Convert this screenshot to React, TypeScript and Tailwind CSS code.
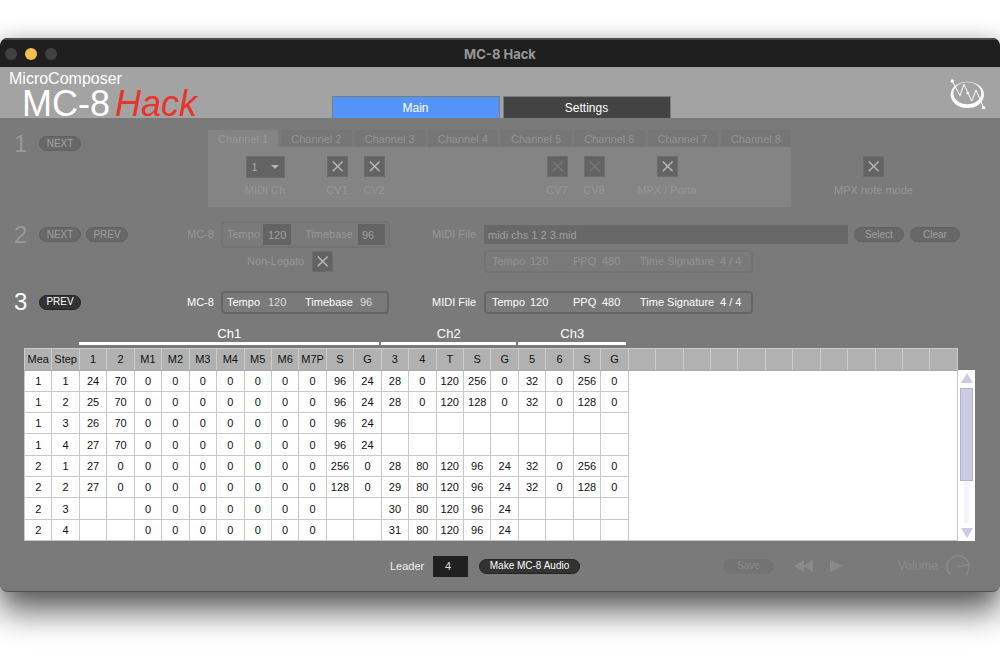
/**
 * App.tsx
 * MC-8 Hack: MIDI file to MicroComposer step table converter
 * Three numbered steps, only the active one is lit
 */

import { useState } from "react";
import clsx from "clsx";

const CHANNELS = [1, 2, 3, 4, 5, 6, 7, 8];

const GROUPS = [
  { name: "Ch1", columns: ["1", "2", "M1", "M2", "M3", "M4", "M5", "M6", "M7P", "S", "G"] },
  { name: "Ch2", columns: ["3", "4", "T", "S", "G"] },
  { name: "Ch3", columns: ["5", "6", "S", "G"] },
];

const SPARE_COLUMNS = 12;

// "-" is a cell without a value
const ROWS = [
  "1 1 24 70 0 0 0 0 0 0 0 96 24 28 0 120 256 0 32 0 256 0",
  "1 2 25 70 0 0 0 0 0 0 0 96 24 28 0 120 128 0 32 0 128 0",
  "1 3 26 70 0 0 0 0 0 0 0 96 24 - - - - - - - - -",
  "1 4 27 70 0 0 0 0 0 0 0 96 24 - - - - - - - - -",
  "2 1 27 0 0 0 0 0 0 0 0 256 0 28 80 120 96 24 32 0 256 0",
  "2 2 27 0 0 0 0 0 0 0 0 128 0 29 80 120 96 24 32 0 128 0",
  "2 3 - - 0 0 0 0 0 0 0 - - 30 80 120 96 24 - - - -",
  "2 4 - - 0 0 0 0 0 0 0 - - 31 80 120 96 24 - - - -",
].map((row) => row.split(" "));

function PillButton({ children, active = false, className = "w-[42px]" }: { children: string; active?: boolean; className?: string }) {
  return (
    <button
      className={clsx(
        "flex h-[15px] shrink-0 items-center justify-center rounded-full border text-[10px] leading-3 whitespace-nowrap",
        active ? "border-[#222222] bg-[#333333] text-white" : "border-[#606060] bg-[#686868] text-[#a0a0a0]",
        className
      )}
    >
      {children}
    </button>
  );
}

function StepHeader({ number, buttons, active = false }: { number: number; buttons: string[]; active?: boolean }) {
  return (
    <div className="flex items-center gap-[5px]">
      <h2 className={clsx("w-5 text-2xl leading-6", active ? "text-white" : "text-[#999999]")}>{number}</h2>
      {buttons.map((label) => (
        <PillButton key={label} active={active}>
          {label}
        </PillButton>
      ))}
    </div>
  );
}

function CrossBox({ id, dim = false }: { id: string; dim?: boolean }) {
  return (
    <span className="relative block size-[21px]">
      <input id={id} type="checkbox" defaultChecked className="peer block size-[21px] appearance-none border border-[#6c6c6c] bg-[#636363]" />
      <svg
        viewBox="0 0 21 21"
        className={clsx("pointer-events-none absolute inset-0 hidden peer-checked:block", dim ? "text-[#777777]" : "text-[#b4b4b4]")}
      >
        <path d="M5.8 5.5 15.6 15.3M15.6 5.5 5.8 15.3" stroke="currentColor" strokeWidth="1.6" fill="none" />
      </svg>
    </span>
  );
}

function CrossField({ id, label, dim = false, className }: { id: string; label: string; dim?: boolean; className?: string }) {
  return (
    <div className={clsx("flex flex-col items-center gap-[5px]", className)}>
      <CrossBox id={id} dim={dim} />
      <label htmlFor={id} className="leading-4 whitespace-nowrap text-[#979797]">
        {label}
      </label>
    </div>
  );
}

function MidiInfo({ active = false }: { active?: boolean }) {
  return (
    <div
      className={clsx(
        "flex h-[23px] w-[269px] items-center rounded border-2 pl-[6px] whitespace-nowrap",
        active ? "border-[#666666] text-white" : "border-[#737373] text-[#939393]"
      )}
    >
      <span className="w-[38px]">Tempo</span>
      <span className="w-[43px]">120</span>
      <span className="w-[29px]">PPQ</span>
      <span className="w-[38px]">480</span>
      <span className="w-20">Time Signature</span>
      <span>4 / 4</span>
    </div>
  );
}

function ChannelPanel() {
  const [channel, setChannel] = useState(1);

  return (
    <div className="w-[583px] shrink-0">
      <div role="tablist" className="flex gap-[3px]">
        {CHANNELS.map((n) => (
          <button
            key={n}
            role="tab"
            aria-selected={n === channel}
            onClick={() => setChannel(n)}
            className={clsx("h-[17px] flex-1 leading-4 whitespace-nowrap", n === channel ? "bg-[#848484] text-[#989898]" : "bg-[#767676] text-[#949494]")}
          >
            Channel {n}
          </button>
        ))}
      </div>
      <div className="flex h-[60px] items-start bg-[#848484] pt-[9px] pr-[88px] pl-[30px]">
        <div className="flex w-[54px] flex-col items-center gap-1">
          <span className="relative">
            <select id="midi-ch" className="block h-[22px] w-[39px] appearance-none border border-[#6c6c6c] bg-[#636363] pl-[5px] text-[#aaaaaa]">
              <option>1</option>
              <option>2</option>
              <option>3</option>
            </select>
            <svg viewBox="0 0 8 4" className="pointer-events-none absolute top-[9px] right-[6px] h-1 w-2 fill-[#b4b4b4]">
              <path d="M0 0h8L4 4z" />
            </svg>
          </span>
          <label htmlFor="midi-ch" className="leading-4 whitespace-nowrap text-[#979797]">
            MIDI Ch
          </label>
        </div>
        <CrossField id="cv1" label="CV1" className="ml-[27px] w-9" />
        <CrossField id="cv2" label="CV2" className="ml-px w-9" />
        <CrossField id="cv7" label="CV7" dim className="ml-auto w-9" />
        <CrossField id="cv8" label="CV8" dim className="ml-px w-9" />
        <CrossField id="mpx" label="MPX / Porta" className="ml-[19px] w-[72px]" />
      </div>
    </div>
  );
}

function StepTable() {
  return (
    <div className="mr-[25px] ml-6 flex items-end">
      <div className="min-w-0 flex-1">
        <table className="h-[217px] w-full table-fixed border-collapse text-center leading-4 text-[#111111]">
          <colgroup>
            <col span={34} />
          </colgroup>
          <thead>
            <tr className="h-6">
              <td colSpan={2} />
              {GROUPS.map((group) => (
                <th key={group.name} colSpan={group.columns.length} className="h-6 p-0 align-top text-[13px] font-normal text-white">
                  <div className="mr-[2px] border-b-3 border-white pt-[2px]">{group.name}</div>
                </th>
              ))}
              <td colSpan={SPARE_COLUMNS} />
            </tr>
            <tr className="h-[22px] bg-[#b1b1b1]">
              {["Mea", "Step", ...GROUPS.flatMap((group) => group.columns)].map((name, i) => (
                <th key={i} className="border border-[#cccccc] border-b-[#aaaaaa] p-0 font-normal">
                  {name}
                </th>
              ))}
              {Array.from({ length: SPARE_COLUMNS }, (_, i) => (
                <td key={i} className="border border-[#cccccc] border-b-[#aaaaaa] p-0" />
              ))}
            </tr>
          </thead>
          <tbody className="bg-white">
            {ROWS.map((row, r) => (
              <tr key={r}>
                {row.map((value, i) => (
                  <td key={i} className="border border-[#c8c8c8] p-0">
                    {value === "-" ? "" : value}
                  </td>
                ))}
                {r === 0 && <td colSpan={SPARE_COLUMNS} rowSpan={ROWS.length} className="border border-[#c8c8c8] p-0" />}
              </tr>
            ))}
          </tbody>
        </table>
      </div>
      {/* Scrollbar */}
      <div className="flex h-[171px] w-[17px] shrink-0 flex-col items-center bg-white py-[3px]">
        <button aria-label="Scroll up">
          <svg viewBox="0 0 12 10" className="block h-[10px] w-3 fill-[#cbcbe4]">
            <path d="M6 0 12 10H0z" />
          </svg>
        </button>
        <div className="my-[5px] flex w-full flex-1 flex-col items-center">
          <div className="h-[93px] w-[13px] border border-[#b4b4c0] bg-[#cbcbe4]" />
          <div className="w-[5px] flex-1 bg-[#f4f4fa]" />
        </div>
        <button aria-label="Scroll down">
          <svg viewBox="0 0 12 10" className="block h-[10px] w-3 fill-[#cbcbe4]">
            <path d="M0 0h12L6 10z" />
          </svg>
        </button>
      </div>
    </div>
  );
}

export default function App() {
  return (
    <div className="min-h-screen overflow-hidden bg-white pt-[38px] pb-[75px] font-['Liberation_Sans',Arial,sans-serif] text-[11px]">
      <div className="overflow-hidden rounded-lg border-b border-[#505050] bg-[#7a7a7a] shadow-[0_20px_32px_rgba(0,0,0,0.6),0_0_20px_rgba(0,0,0,0.2)]">
        {/* Title bar */}
        <div className="grid h-[29px] grid-cols-[1fr_auto_1fr] items-center border-t-2 border-[#4a4a4a] bg-[#1f1f1f] px-[5px]">
          <div className="flex gap-2">
            <button aria-label="Close" className="size-3 rounded-full bg-[#414141]" />
            <button aria-label="Minimize" className="size-3 rounded-full bg-[#f5bf4f]" />
            <button aria-label="Zoom" className="size-3 rounded-full bg-[#414141]" />
          </div>
          <span className="font-[Inter,sans-serif] text-[13px] leading-4 font-bold text-[#999999]">MC-8 Hack</span>
        </div>

        {/* Brand and page tabs */}
        <header className="grid h-[51px] grid-cols-[1fr_auto_1fr] grid-rows-1 bg-[#a3a3a3] pl-[2px]">
          <h1 className="pt-1 pl-[7px] whitespace-nowrap text-white">
            <span className="block text-base leading-4">MicroComposer</span>
            <span className="flex gap-[5px] pl-[13px] text-[36px] leading-[34px]">
              <span>MC-8</span>
              <em className="text-[#e8342a]">Hack</em>
            </span>
          </h1>
          <nav className="flex gap-[3px] self-end text-xs text-white">
            <button className="h-[22px] w-[168px] border border-b-0 border-[#7c7c7c] bg-[#5493f7]">Main</button>
            <button className="h-[22px] w-[168px] border border-b-0 border-[#7c7c7c] bg-[#434343]">Settings</button>
          </nav>
          <svg viewBox="0 0 108 90" className="mt-3 mr-[14px] h-[30px] w-9 justify-self-end text-white">
            <path
              d="M2 47.5a50 39.5 0 1 0 100 0a50 39.5 0 1 0-100 0zM10 43a42 33 0 1 1 84 0a42 33 0 1 1-84 0z"
              fill="currentColor"
              fillRule="evenodd"
            />
            <path d="M7 6 30 50 42 16 65 66 78 33 101 87" fill="none" stroke="currentColor" strokeWidth="3" />
            <circle cx="7" cy="6" r="5" fill="currentColor" />
            <circle cx="53" cy="42" r="4" fill="currentColor" />
            <circle cx="101" cy="86" r="5" fill="currentColor" />
          </svg>
        </header>

        <main>
          {/* Step 1: channel setup */}
          <section className="flex pt-3 pb-[14px] pl-[14px]">
            <div className="flex h-[27px] w-[194px] shrink-0">
              <StepHeader number={1} buttons={["NEXT"]} />
            </div>
            <ChannelPanel />
            <CrossField id="mpx-note" label="MPX note mode" className="flex-1 pt-[26px] pr-11" />
          </section>

          {/* Step 2: source file */}
          <section className="grid grid-cols-[173px_34px_211px_52px_1fr] items-center gap-y-[2px] pr-10 pl-[14px] text-[#979797]">
            <StepHeader number={2} buttons={["NEXT", "PREV"]} />
            <span>MC-8</span>
            <div className="flex h-[27px] w-[169px] items-center rounded border-2 border-[#737373] pl-1">
              <label htmlFor="tempo" className="w-9">
                Tempo
              </label>
              <input id="tempo" defaultValue="120" className="h-[21px] w-7 bg-[#636363] pl-[5px] text-[#a0a0a0]" />
              <label htmlFor="timebase" className="ml-[14px] w-[53px]">
                Timebase
              </label>
              <input id="timebase" defaultValue="96" className="h-[21px] w-[27px] bg-[#636363] pl-1 text-[#a0a0a0]" />
            </div>
            <label htmlFor="midi-file">MIDI File</label>
            <div className="flex items-center gap-[6px]">
              <input
                id="midi-file"
                defaultValue="midi chs 1 2 3.mid"
                className="h-[19px] min-w-0 flex-1 bg-[#686868] pl-1 text-[#a0a0a0]"
              />
              <PillButton className="w-[50px]">Select</PillButton>
              <PillButton className="w-[50px]">Clear</PillButton>
            </div>

            <div className="col-span-2 col-start-2 flex items-center gap-[7px] pl-[60px]">
              <label htmlFor="non-legato">Non-Legato</label>
              <CrossBox id="non-legato" />
            </div>
            <div className="col-start-5">
              <MidiInfo />
            </div>
          </section>

          {/* Step 3: result */}
          <section className="grid grid-cols-[173px_34px_211px_52px_1fr] items-center pt-[17px] pr-10 pb-[10px] pl-[14px] text-white">
            <StepHeader number={3} buttons={["PREV"]} active />
            <span>MC-8</span>
            <div className="flex h-[23px] w-[168px] items-center rounded border-2 border-[#666666] pl-1">
              <span className="w-[41px]">Tempo</span>
              <span className="w-[37px] text-[#dddddd]">120</span>
              <span className="w-[55px]">Timebase</span>
              <span className="text-[#dddddd]">96</span>
            </div>
            <span>MIDI File</span>
            <MidiInfo active />
          </section>

          <StepTable />
        </main>

        {/* Export and playback */}
        <footer className="flex h-[50px] items-center pr-[30px] pl-[39%]">
          <label htmlFor="leader" className="w-[43px] text-[#f0f0f0]">
            Leader
          </label>
          <input id="leader" defaultValue="4" className="h-[21px] w-[35px] bg-[#202020] pl-3 text-[#dddddd]" />
          <PillButton active className="ml-[11px] w-[101px]">
            Make MC-8 Audio
          </PillButton>

          <div className="ml-auto flex items-center text-[#8a8a8a]">
            <button className="h-[15px] w-[51px] rounded-full bg-[#737373] text-[10px] leading-3">Save</button>
            <button aria-label="Rewind" className="ml-5">
              <svg viewBox="0 0 20 12" className="h-3 w-5 fill-current">
                <path d="M10 0v12L0 6zM19 0v12L9 6z" />
              </svg>
            </button>
            <button aria-label="Play" className="ml-4">
              <svg viewBox="0 0 12 12" className="h-3 w-3 fill-current">
                <path d="M0 0v12l12-6z" />
              </svg>
            </button>
            <label htmlFor="volume" className="ml-14 flex items-center gap-2 text-xs">
              Volume
              <svg viewBox="0 0 24 24" className="size-6 fill-none stroke-current">
                <path d="M4.2 20.5A11 11 0 1 1 19.8 20.5" strokeWidth="1.3" />
                <path d="M12 12.5 22 11" strokeWidth="1.3" />
              </svg>
            </label>
            <input id="volume" type="range" className="sr-only" />
          </div>
        </footer>
      </div>
    </div>
  );
}
